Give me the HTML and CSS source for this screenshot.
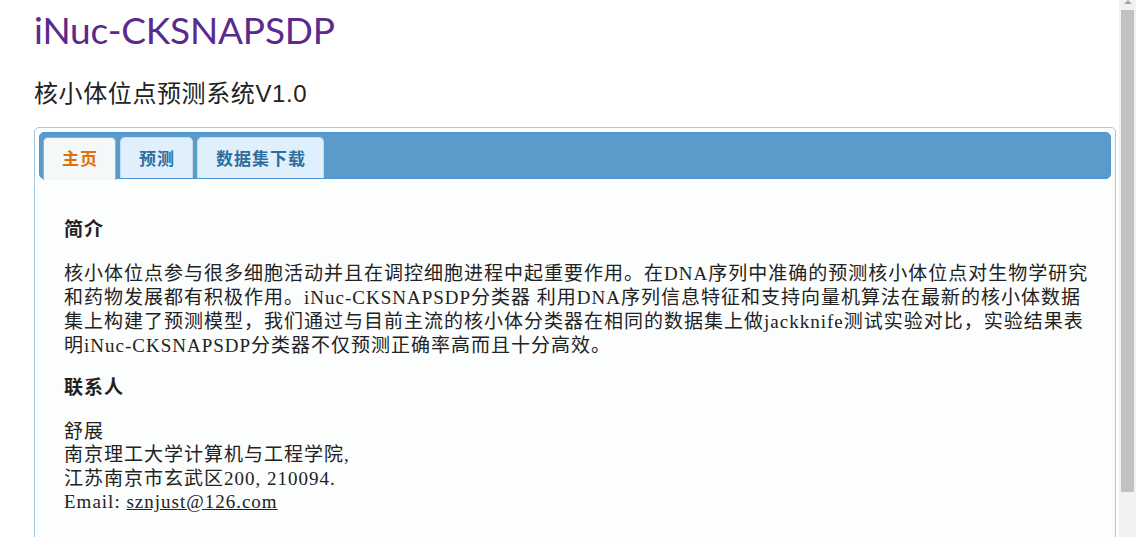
FILE: index.html
```html
<!DOCTYPE html>
<html lang="zh">
<head>
<meta charset="utf-8">
<title>iNuc-CKSNAPSDP</title>
<link rel="stylesheet" href="styles.css">
</head>
<body>
<div class="page">
  <h1 class="site-title">iNuc-CKSNAPSDP</h1>
  <h2 class="site-sub">核小体位点预测系统V1.0</h2>
  <div class="tabs">
    <ul class="tab-nav">
      <li class="tab active">主页</li>
      <li class="tab">预测</li>
      <li class="tab">数据集下载</li>
    </ul>
    <div class="panel">
      <h3 class="sec-title">简介</h3>
      <p class="para">核小体位点参与很多细胞活动并且在调控细胞进程中起重要作用。在DNA序列中准确的预测核小体位点对生物学研究和药物发展都有积极作用。iNuc-CKSNAPSDP分类器 利用DNA序列信息特征和支持向量机算法在最新的核小体数据集上构建了预测模型，我们通过与目前主流的核小体分类器在相同的数据集上做jackknife测试实验对比，实验结果表明iNuc-CKSNAPSDP分类器不仅预测正确率高而且十分高效。</p>
      <h3 class="sec-title">联系人</h3>
      <p class="contact">舒展<br>南京理工大学计算机与工程学院,<br>江苏南京市玄武区200, 210094.<br>Email: <a class="mail" href="#">sznjust@126.com</a></p>
    </div>
  </div>
</div>
<div class="scrollbar">
  <div class="sb-arrow"></div>
  <div class="sb-thumb"></div>
</div>
</body>
</html>
```

FILE: styles.css
```css
html, body {
  margin: 0;
  padding: 0;
  background: #ffffff;
}
.page {
  padding: 0 20px 0 34px;
}
.site-title {
  margin: 0;
  padding-top: 9px;
  height: 47px;
  font-family: Lato, "Open Sans", sans-serif;
  font-weight: normal;
  font-size: 37px;
  line-height: 42px;
  color: #5a2a8c;
  letter-spacing: -0.2px;
}
.site-sub {
  margin: 0;
  padding-top: 22px;
  font-family: "Liberation Sans", "Noto Sans CJK SC", sans-serif;
  font-weight: normal;
  font-size: 24px;
  line-height: 32px;
  height: 49px;
  color: #222;
  letter-spacing: 0.6px;
}
.tabs {
  border: 1px solid #a6c9e2;
  border-radius: 5px;
  background: #fcfdfd;
  padding: 4px 4px 0;
  height: 440px;
}
.tab-nav {
  list-style: none;
  margin: 0;
  padding: 4px 3px 0;
  display: flex;
  gap: 4px;
  background: #5b9bcc;
  border: 1px solid #4a97d4;
  border-radius: 5px;
  height: 41px;
}
.tab {
  font-family: "Noto Sans CJK SC", sans-serif;
  font-weight: bold;
  font-size: 17px;
  letter-spacing: 1px;
  line-height: 40px;
  padding: 0 17px 0 18px;
  background: #dfeffc;
  color: #2e6e9e;
  border: 1px solid #c5dbec;
  border-bottom: none;
  border-radius: 5px 5px 0 0;
}
.tab.active {
  background: #f5f8f9;
  color: #e17009;
  border-color: #79b7e7;
  height: 42px;
}
.panel {
  padding: 39px 17px 0 25px;
  font-family: "Liberation Serif", "Noto Sans CJK SC", serif;
  color: #222;
  font-size: 19px;
  letter-spacing: 1px;
}
.sec-title {
  margin: 0 0 20px;
  font-size: 19px;
  font-weight: bold;
  line-height: 24px;
  color: #222;
}
.para {
  margin: 0 0 18px;
  line-height: 24px;
}
.contact {
  margin: 0;
  line-height: 23.3px;
}
.mail {
  color: #222;
}
.scrollbar {
  position: fixed;
  top: 0;
  right: 0;
  width: 17px;
  height: 100%;
  background: #f1f1f1;
}
.sb-arrow {
  position: absolute;
  top: 0;
  left: 5px;
  width: 0;
  height: 0;
  border-left: 4px solid transparent;
  border-right: 4px solid transparent;
  border-bottom: 4px solid #a3a3a3;
}
.sb-thumb {
  position: absolute;
  top: 10px;
  left: 2px;
  width: 13px;
  height: 482px;
  background: #c1c1c1;
}
```
